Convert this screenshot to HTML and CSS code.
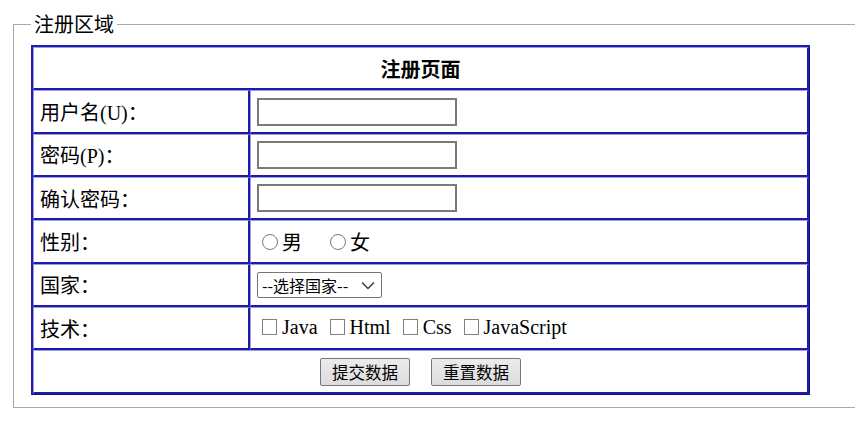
FILE: index.html
```html
<!doctype html>
<html>

<head>
    <meta charset="utf-8" />
    <link rel="stylesheet" href="styles.css">
</head>

<body>

    <fieldset class="area">
        <legend>注册区域</legend>

        <table class="reg-table">
            <tr>
                <td colspan="2" class="title">注册页面</td>
            </tr>
            <tr>
                <td class="label">用户名(U)：</td>
                <td class="field"><input type="text" class="txt" /></td>
            </tr>
            <tr>
                <td class="label">密码(P)：</td>
                <td class="field"><input type="password" class="txt" /></td>
            </tr>
            <tr>
                <td class="label">确认密码：</td>
                <td class="field"><input type="password" class="txt" /></td>
            </tr>
            <tr>
                <td class="label">性别：</td>
                <td class="field">
                    <label class="opt"><input type="radio" name="sex" class="radio" />男</label>
                    <label class="opt"><input type="radio" name="sex" class="radio" />女</label>
                </td>
            </tr>
            <tr>
                <td class="label">国家：</td>
                <td class="field">
                    <span class="select">
                        <span class="select-text">--选择国家--</span>
                        <svg width="14" height="9" viewBox="0 0 14 9">
                            <path d="M1 1.5 L7 7.5 L13 1.5" fill="none" stroke="#333" stroke-width="1.3" />
                        </svg>
                    </span>
                </td>
            </tr>
            <tr>
                <td class="label">技术：</td>
                <td class="field">
                    <label class="chk"><input type="checkbox" class="box" />Java</label>
                    <label class="chk"><input type="checkbox" class="box" />Html</label>
                    <label class="chk"><input type="checkbox" class="box" />Css</label>
                    <label class="chk"><input type="checkbox" class="box" />JavaScript</label>
                </td>
            </tr>
            <tr>
                <td colspan="2" class="actions">
                    <button class="btn">提交数据</button>
                    <button class="btn">重置数据</button>
                </td>
            </tr>
        </table>
    </fieldset>

</body>

</html>
```

FILE: styles.css
```css
html,
body {
    margin: 0;
    height: 100%;
    overflow: hidden;
    background-color: white;
    font-family: "Liberation Serif", "Noto Sans CJK SC", serif;
    font-size: 20px;
    color: black;
}

.area {
    margin: 12px 0 0 13px;
    padding: 9px 0 12px 17px;
    width: 900px;
    border: 1px solid #a9a9a9;
}

.area legend {
    margin-left: 0;
    padding: 0 3px;
    font-family: "Noto Sans CJK SC", sans-serif;
    font-size: 20px;
    line-height: 24px;
}

.reg-table {
    width: 779px;
    border-spacing: 0;
    border-top: 2px solid #1c1cae;
    border-left: 2px solid #1c1cae;
    border-right: 1px solid #12128a;
    border-bottom: 1px solid #12128a;
}

.reg-table td {
    height: 40.35px;
    padding: 0 6px;
    border-top: 1px solid #9c9ce2;
    border-left: 1px solid #9c9ce2;
    border-right: 2px solid #1c1ca8;
    border-bottom: 2px solid #1c1ca8;
    vertical-align: middle;
}

.reg-table .title {
    text-align: center;
    font-family: "Noto Sans CJK SC", sans-serif;
    font-weight: bold;
}

.reg-table .label {
    width: 202px;
    padding-left: 6px;
}

.reg-table .field {
    padding-left: 6px;
}

.txt {
    box-sizing: border-box;
    width: 200px;
    height: 28px;
    margin: 0;
    border: 2px solid #7a7a7a;
    vertical-align: middle;
}

.opt {
    display: inline-flex;
    align-items: center;
    margin-left: 5px;
    margin-right: 18px;
    font-family: "Noto Sans CJK SC", sans-serif;
}

.radio {
    appearance: none;
    box-sizing: border-box;
    width: 16px;
    height: 16px;
    margin: 0 4px 0 0;
    border: 1px solid #767676;
    border-radius: 50%;
    background: white;
}

.select {
    display: inline-flex;
    align-items: center;
    box-sizing: border-box;
    width: 125px;
    height: 26px;
    padding: 0 6px 0 4px;
    border: 1px solid #767676;
    border-radius: 2px;
    font-family: "Noto Sans CJK SC", sans-serif;
    font-size: 16px;
    vertical-align: middle;
}

.select .select-text {
    flex-grow: 1;
}

.chk {
    display: inline-flex;
    align-items: center;
    margin-left: 5px;
}

.chk + .chk {
    margin-left: 7px;
}

.box {
    appearance: none;
    box-sizing: border-box;
    width: 15px;
    height: 16px;
    margin: 0 5px 0 0;
    border: 1px solid #808080;
    background: white;
}

.reg-table .actions {
    text-align: center;
}

.btn {
    box-sizing: border-box;
    width: 90px;
    height: 28px;
    margin: 0 8px;
    padding: 0;
    border: 1px solid #767676;
    border-radius: 2px;
    background: linear-gradient(#ececec, #dcdcdc);
    font-family: "Noto Sans CJK SC", sans-serif;
    font-size: 16.5px;
    color: black;
}
```
